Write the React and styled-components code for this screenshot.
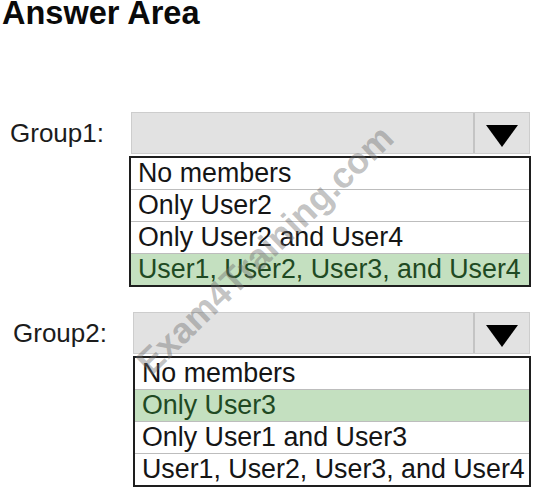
import React from "react";
import styled, { createGlobalStyle } from "styled-components";

const Global = createGlobalStyle`
  html, body { margin: 0; padding: 0; background: #ffffff; }
  body { font-family: "Liberation Sans", Arial, sans-serif; }
`;

const Page = styled.div`
  position: relative;
  width: 534px;
  height: 490px;
  overflow: hidden;
  background: #fff;
  box-sizing: border-box;
  padding-right: 3px;
  display: flex;
  flex-direction: column;
`;

const Heading = styled.h1`
  margin: -3px 0 0 2px;
  font-family: "Liberation Sans", Arial, sans-serif;
  font-weight: 700;
  font-size: 32.5px;
  line-height: 32px;
  color: #0a0a0a;
`;

const Group = styled.div`
  display: grid;
  grid-template-columns: ${(p) => p.$labelWidth}px 1fr;
  margin-top: ${(p) => p.$top}px;
`;

const Label = styled.div`
  height: 42px;
  display: flex;
  align-items: center;
  padding-left: ${(p) => p.$pad}px;
  font-size: 26px;
  color: #1c1c1c;
`;

const Control = styled.div`
  display: flex;
  flex-direction: column;
  gap: 2px;
`;

const Select = styled.div`
  height: 42px;
  margin-left: ${(p) => p.$inset}px;
  margin-right: 1px;
  box-sizing: border-box;
  background: #e2e2e2;
  border: 1px solid #cdcdcd;
  display: flex;
`;

const SelectField = styled.div`
  flex: 1;
`;

const SelectButton = styled.div`
  width: 56px;
  border-left: 2px solid #c4c4c4;
  display: flex;
  align-items: center;
  justify-content: center;
  padding-top: 6px;
  box-sizing: border-box;
`;

const List = styled.div`
  border: 2px solid #1e1e1e;
  display: flex;
  flex-direction: column;
  background: #fff;
`;

const Option = styled.div`
  height: 31px;
  display: flex;
  align-items: center;
  padding-left: 7px;
  font-size: 26.8px;
  white-space: nowrap;
  color: ${(p) => (p.$selected ? "#1f4a23" : "#151515")};
  background: ${(p) => (p.$selected ? "#c4e0c0" : "#ffffff")};
  & + & {
    border-top: 1px solid #bdbdbd;
  }
`;

const Watermark = styled.div`
  position: absolute;
  left: 265px;
  top: 250px;
  transform: translate(-50%, -50%) rotate(-44deg);
  font-family: "Liberation Sans", Arial, sans-serif;
  font-weight: 700;
  font-size: 36px;
  white-space: nowrap;
  color: rgba(110, 110, 110, 0.42);
  pointer-events: none;
`;

const Arrow = () => (
  <svg width="32" height="22" viewBox="0 0 32 22">
    <polygon points="0,0 32,0 16,22" fill="#000" />
  </svg>
);

const groups = [
  {
    label: "Group1:",
    labelWidth: 129,
    pad: 10,
    inset: 2,
    top: 83,
    options: ["No members", "Only User2", "Only User2 and User4", "User1, User2, User3, and User4"],
    selected: 3,
  },
  {
    label: "Group2:",
    labelWidth: 133,
    pad: 13,
    inset: 0,
    top: 25,
    options: ["No members", "Only User3", "Only User1 and User3", "User1, User2, User3, and User4"],
    selected: 1,
  },
];

export default function App() {
  return (
    <Page>
      <Global />
      <Heading>Answer Area</Heading>
      {groups.map((g) => (
        <Group key={g.label} $labelWidth={g.labelWidth} $top={g.top}>
          <Label $pad={g.pad}>{g.label}</Label>
          <Control>
            <Select $inset={g.inset}>
              <SelectField />
              <SelectButton>
                <Arrow />
              </SelectButton>
            </Select>
            <List>
              {g.options.map((o, i) => (
                <Option key={o} $selected={i === g.selected}>
                  {o}
                </Option>
              ))}
            </List>
          </Control>
        </Group>
      ))}
      <Watermark>Exam4Training.com</Watermark>
    </Page>
  );
}
